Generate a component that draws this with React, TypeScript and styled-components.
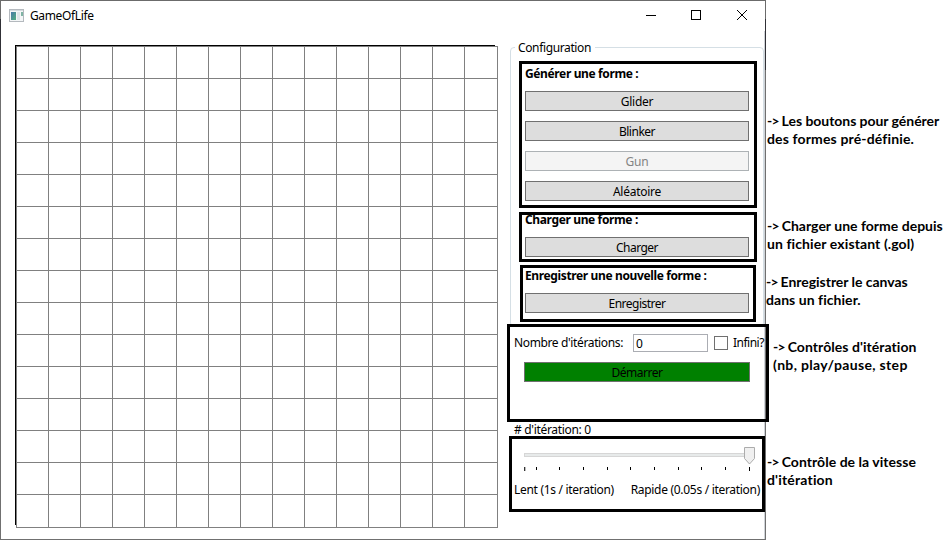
import React from "react";
import styled, { createGlobalStyle } from "styled-components";

const GlobalStyle = createGlobalStyle`
  * { box-sizing: border-box; }
  html, body { margin: 0; background: #fff; overflow: hidden; }
  body { font: 12px/16px "Noto Sans", "Open Sans", sans-serif; color: #000; }
`;

const Page = styled.div`
  display: flex;
  width: 950px;
  height: 540px;
  background: #fff;
`;

const AppWindow = styled.main`
  flex: none;
  width: 766px;
  height: 540px;
  border: 1px solid #707070;
  border-image: linear-gradient(#6b6b6b 0 19px, #303036 19px 70px, #707070 70px) 1;
`;

const TitleBar = styled.header`
  display: flex;
  align-items: center;
  height: 30px;
  padding: 0 17px 0 8px;
`;

const Text = styled.span<{ $gap?: number }>`
  display: inline-block;
  white-space: nowrap;
  letter-spacing: ${(p) => p.$gap ?? -0.37}px;
`;

const Title = styled(Text)`
  flex: 1;
  margin-left: 6px;
`;

const WindowButtons = styled.div`
  display: flex;
  gap: 34px;
  margin-bottom: 2px;
`;

const Content = styled.div`
  display: flex;
  height: 508px;
  box-shadow: inset -1px 0 #cfd3d8;
`;

const Board = styled.div`
  flex: none;
  margin: 14px 0 0 14px;
  width: 483px;
  height: 483px;
`;

const Side = styled.div`
  display: flex;
  flex-direction: column;
  align-items: flex-start;
  flex: none;
  width: 269px;
  margin-left: 8px;
`;

const Group = styled.fieldset`
  flex: none;
  width: 254px;
  min-width: 0;
  height: 287px;
  margin: 9px 0 0 4px;
  padding: 0;
  border: 1px solid #d5dfe5;
  border-radius: 4px;
`;

const Legend = styled.legend`
  height: 14px;
  margin-left: 4px;
  padding: 0 4px 0 3px;
`;

const Frame = styled.section<{ $w: number; $h: number; $ml: number; $mt: number; $pad: string }>`
  flex: none;
  width: ${(p) => p.$w}px;
  height: ${(p) => p.$h}px;
  margin: ${(p) => p.$mt}px 0 0 ${(p) => p.$ml}px;
  padding: ${(p) => p.$pad};
  border: 3px solid #000;
`;

const Heading = styled(Text)<{ $shift?: number }>`
  display: block;
  height: 16px;
  margin-top: ${(p) => p.$shift ?? 0}px;
  font-weight: 700;
`;

const Button = styled.button<{ $mt?: number; $ml?: number; $w?: number; $go?: boolean }>`
  display: block;
  width: ${(p) => p.$w ?? 224}px;
  height: 20px;
  margin: ${(p) => p.$mt ?? 10}px 0 0 ${(p) => p.$ml ?? 0}px;
  padding: 1px 0 0;
  border: 1px solid #707070;
  background: ${(p) => (p.$go ? "#008000" : "#ddd")};
  color: #000;
  font: inherit;
  line-height: 17px;
  text-align: center;
  &:disabled {
    border-color: #adb2b5;
    background: #f4f4f4;
    color: #838383;
  }
`;

const IterationRow = styled.div`
  display: flex;
  align-items: center;
  height: 18px;
`;

const IterationLabel = styled(Text)`
  flex: none;
  width: 119px;
`;

const NumberInput = styled.input`
  flex: none;
  width: 75px;
  height: 18px;
  margin: 0;
  padding: 0 2px;
  border: 1px solid #abadb3;
  font: inherit;
  outline: none;
`;

const Check = styled.span`
  flex: none;
  width: 14px;
  height: 14px;
  margin: 0 5px 0 6px;
  border: 1px solid #707070;
  background: #fff;
`;

const Counter = styled.div`
  flex: none;
  height: 14px;
  padding-left: 8px;
  line-height: 15px;
`;

const SliderSvg = styled.svg`
  display: block;
  margin-left: 10px;
`;

const Labels = styled.div`
  display: flex;
  justify-content: space-between;
  margin-top: 6px;
  width: 246px;
`;

const Notes = styled.aside`
  display: flex;
  flex-direction: column;
  flex: none;
  width: 184px;
  font: 700 14px/18px Lato, sans-serif;
`;

const Note = styled.p<{ $mt: number; $ml: number }>`
  display: flex;
  flex-direction: column;
  align-items: flex-start;
  margin: ${(p) => p.$mt}px 0 0 ${(p) => p.$ml}px;
`;

const Arrow = styled.span`
  margin-right: -0.5px;
  letter-spacing: -0.8px;
`;

const lines = [...Array.from({ length: 15 }, (_, i) => i * 32 + 1), 482];
const ticks = [12, 35, 59, 83, 106, 130, 154, 177, 201, 225];

const AppIcon = () => (
  <svg width="15" height="15" viewBox="0 0 15 15" shapeRendering="crispEdges">
    <defs>
      <linearGradient id="pane" x1="0" y1="0" x2="1" y2="1">
        <stop offset="0" stopColor="#4878a8" />
        <stop offset="1" stopColor="#54b080" />
      </linearGradient>
    </defs>
    <rect x=".5" y=".5" width="14" height="12" fill="#f4f6f7" stroke="#b4b9be" />
    <rect x="1" y="1" width="13" height="1" fill="#d4dade" />
    <rect x="2" y="3" width="5" height="8" fill="url(#pane)" />
    <rect x="8" y="3" width="3" height="8" fill="#dfe5e8" />
    <rect x="12" y="3" width="2" height="4" fill="#7fb4a4" />
  </svg>
);

const Slider = () => (
  <SliderSvg width="240" height="30" viewBox="0 0 240 30" shapeRendering="crispEdges">
    <rect x=".5" y="7.5" width="225" height="3" fill="#e7eaea" stroke="#d6d6d6" />
    <path d="M.5 21v4" stroke="#333" />
    <path d="M1.5 21v4" stroke="#bbb" />
    {ticks.map((x) => <path key={x} d={`M${x + 0.5} 21v${x === 225 ? 4 : 3}`} stroke="#000" />)}
    <path d="M220.5 1.5h10v11l-5 5.5l-5-5.5z" fill="#f0f0f0" stroke="#acacac" shapeRendering="auto" />
  </SliderSvg>
);

export default function App() {
  return (
    <>
      <GlobalStyle />
      <Page>
        <AppWindow>
          <TitleBar>
            <AppIcon />
            <Title>GameOfLife</Title>
            <WindowButtons>
              <svg width="12" height="12"><path d="M2 6.5h10" stroke="#000" /></svg>
              <svg width="12" height="12"><rect x="1.5" y="1.5" width="9" height="9" fill="none" stroke="#000" /></svg>
              <svg width="12" height="12"><path d="M1 1l10 10M11 1L1 11" stroke="#000" /></svg>
            </WindowButtons>
          </TitleBar>
          <Content>
            <Board>
              <svg width="483" height="483" shapeRendering="crispEdges" display="block">
                {lines.map((p) => (
                  <path key={p} d={`M${p + 0.5} 1V483M1 ${p + 0.5}H483`} stroke="#808080" />
                ))}
                <path d="M480 .5H.5V480" fill="none" stroke="#000" />
              </svg>
            </Board>
            <Side>
              <Group>
                <Legend><Text>Configuration</Text></Legend>
                <Frame $w={238} $h={147} $ml={8} $mt={7} $pad="2px 3px">
                  <Heading>Générer une forme :</Heading>
                  <Button $mt={9}><Text $gap={-0.25}>Glider</Text></Button>
                  <Button><Text $gap={-0.5}>Blinker</Text></Button>
                  <Button disabled><Text $gap={-0.2}>Gun</Text></Button>
                  <Button><Text $gap={-0.25}>Aléatoire</Text></Button>
                </Frame>
                <Frame $w={238} $h={50} $ml={8} $mt={4} $pad="0 3px">
                  <Heading $shift={-3}>Charger une forme :</Heading>
                  <Button $mt={9}><Text $gap={-0.5}>Charger</Text></Button>
                </Frame>
                <Frame $w={236} $h={57} $ml={9} $mt={3} $pad="0 2px">
                  <Heading>Enregistrer une nouvelle forme :</Heading>
                  <Button $mt={9}><Text $gap={-0.5}>Enregistrer</Text></Button>
                </Frame>
              </Group>
              <Frame $w={262} $h={98} $ml={1} $mt={-3} $pad="7px 0 0 4px">
                <IterationRow>
                  <IterationLabel>Nombre d'itérations:</IterationLabel>
                  <NumberInput defaultValue="0" />
                  <Check />
                  <Text $gap={-0.5}>Infini?</Text>
                </IterationRow>
                <Button $w={226} $ml={10} $go><Text $gap={-0.5}>Démarrer</Text></Button>
              </Frame>
              <Counter><Text $gap={-0.32}># d'itération: 0</Text></Counter>
              <Frame $w={256} $h={76} $ml={3} $mt={0} $pad="7px 0 0 2px">
                <Slider />
                <Labels>
                  <Text $gap={-0.3}>Lent (1s / iteration)</Text>
                  <Text $gap={-0.3}>Rapide (0.05s / iteration)</Text>
                </Labels>
              </Frame>
            </Side>
          </Content>
        </AppWindow>
        <Notes>
          <Note $mt={112} $ml={1}>
            <Text $gap={-0.04}><Arrow>-&gt;</Arrow> Les boutons pour générer</Text>
            <Text $gap={0.15}>des formes pré-définie.</Text>
          </Note>
          <Note $mt={69} $ml={1}>
            <Text $gap={0.01}><Arrow>-&gt;</Arrow> Charger une forme depuis</Text>
            <Text $gap={0.1}>un fichier existant (.gol)</Text>
          </Note>
          <Note $mt={20} $ml={0}>
            <Text $gap={-0.04}><Arrow>-&gt;</Arrow> Enregistrer le canvas</Text>
            <Text $gap={0.05}>dans un fichier.</Text>
          </Note>
          <Note $mt={29} $ml={7}>
            <Text $gap={0.05}><Arrow>-&gt;</Arrow> Contrôles d'itération</Text>
            <Text $gap={0.34}>(nb, play/pause, step</Text>
          </Note>
          <Note $mt={79} $ml={1}>
            <Text $gap={0.04}><Arrow>-&gt;</Arrow> Contrôle de la vitesse</Text>
            <Text $gap={0.18}>d'itération</Text>
          </Note>
        </Notes>
      </Page>
    </>
  );
}
